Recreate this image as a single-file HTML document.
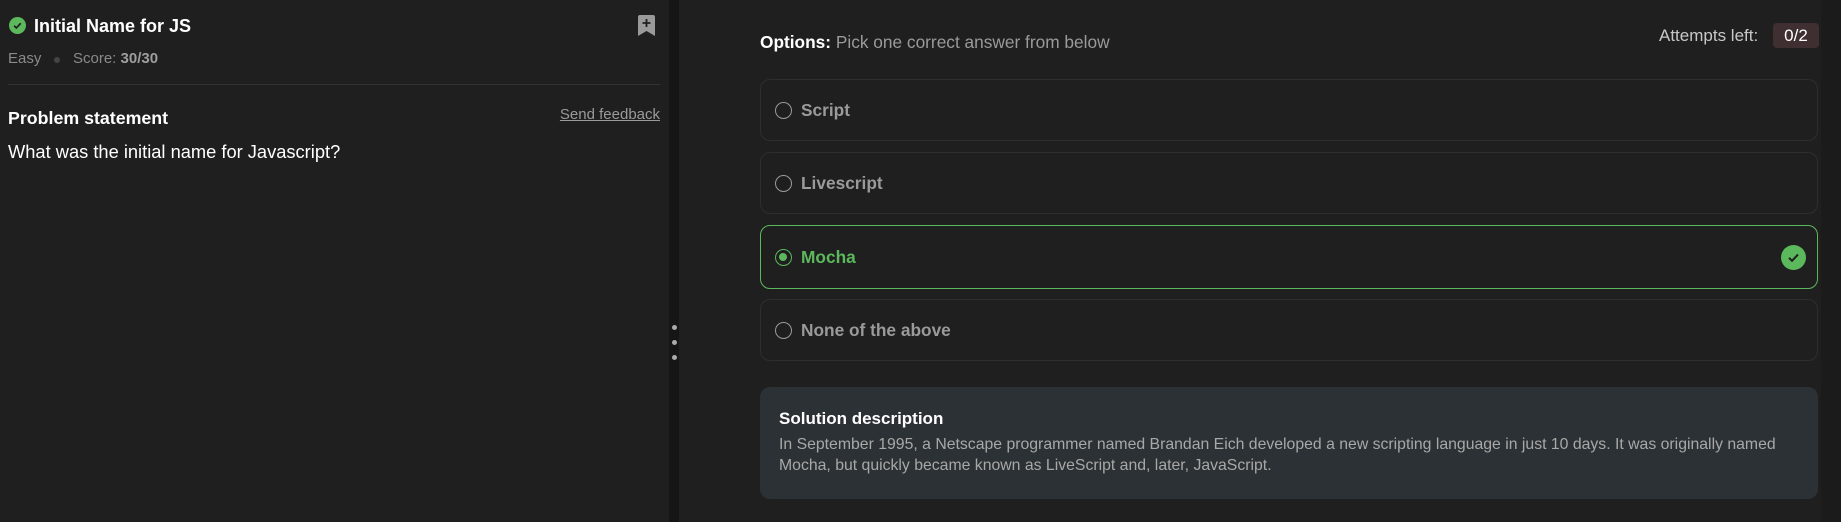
<!DOCTYPE html>
<html><head><meta charset="utf-8"><style>
*{margin:0;padding:0;box-sizing:border-box}
body{width:1841px;height:522px;background:#1f1f1f;font-family:"Liberation Sans",sans-serif;position:relative;overflow:hidden;color:#e8e8e8}
.a{position:absolute}
.opt{position:absolute;left:760px;width:1058px;height:62px;border:1px solid #2e2e2e;border-radius:10px}
.opt .r{position:absolute;left:14px;top:22px;width:17px;height:17px;border:1.5px solid #9a9a9a;border-radius:50%}
.opt .t{position:absolute;left:40px;top:0;line-height:60px;font-size:17.3px;font-weight:bold;color:#9a9a9a}
</style></head><body>
<svg class="a" style="left:9px;top:17px" width="17" height="17" viewBox="0 0 16 16"><circle cx="8" cy="8" r="8" fill="#5cb85c"/><path d="M4.8 8.2l2.1 2.1 4.2-4.4" stroke="#1f1f1f" stroke-width="1.6" fill="none"/></svg>
<div class="a" style="left:34px;top:16px;font-size:18px;font-weight:bold;color:#fff">Initial Name for JS</div>
<svg class="a" style="left:638px;top:15px" width="17" height="21" viewBox="0 0 17 21"><path d="M2 0h13a2 2 0 0 1 2 2v19l-8.5-5L0 21V2a2 2 0 0 1 2-2z" fill="#9a9a9a"/><path d="M8.5 4v8M4.5 8h8" stroke="#1f1f1f" stroke-width="1.8"/></svg>
<div class="a" style="left:8px;top:50px;font-size:15px;color:#8a8a8a">Easy</div>
<div class="a" style="left:54px;top:57px;width:6px;height:6px;border-radius:50%;background:#444"></div>
<div class="a" style="left:73px;top:50px;font-size:15px;color:#8a8a8a">Score: <b style="color:#9e9e9e">30/30</b></div>
<div class="a" style="left:8px;top:84px;width:652px;height:1px;background:#333"></div>
<div class="a" style="left:8px;top:108px;font-size:17.8px;font-weight:bold;color:#fff">Problem statement</div>
<div class="a" style="left:553px;top:106px;width:107px;text-align:right;font-size:15px;color:#9a9a9a;text-decoration:underline;white-space:nowrap;direction:rtl">Send feedback</div>
<div class="a" style="left:8px;top:141px;font-size:18.3px;color:#fff">What was the initial name for Javascript?</div>
<div class="a" style="left:669px;top:0;width:10px;height:522px;background:#151515"></div>
<div class="a" style="left:672px;top:325px;width:5px;height:5px;border-radius:50%;background:#aaa"></div>
<div class="a" style="left:672px;top:340px;width:5px;height:5px;border-radius:50%;background:#aaa"></div>
<div class="a" style="left:672px;top:355px;width:5px;height:5px;border-radius:50%;background:#aaa"></div>
<div class="a" style="left:1821px;top:0;width:20px;height:522px;background:#1b1b1b"></div>
<div class="a" style="left:760px;top:32px;font-size:17.3px;color:#9a9a9a"><b style="color:#fff">Options:</b> Pick one correct answer from below</div>
<div class="a" style="left:1659px;top:26px;font-size:17px;color:#c8c8c8">Attempts left:</div>
<div class="a" style="left:1773px;top:23px;width:46px;height:25px;border-radius:4px;background:#3f2f30;color:#fff;font-size:17px;text-align:center;line-height:25px">0/2</div>
<div class="opt" style="top:79px"><div class="r"></div><div class="t">Script</div></div>
<div class="opt" style="top:152px"><div class="r"></div><div class="t">Livescript</div></div>
<div class="opt" style="top:225px;height:64px;border-color:#5cb85c"><div class="r" style="border-color:#5cb85c;top:23px"><div style="position:absolute;left:3px;top:3px;width:8px;height:8px;border-radius:50%;background:#5cb85c"></div></div><div class="t" style="color:#5cb85c;line-height:62px">Mocha</div>
<svg style="position:absolute;left:1020px;top:19px" width="25" height="25" viewBox="0 0 25 25"><circle cx="12.5" cy="12.5" r="12.5" fill="#5cb85c"/><path d="M8 12.8l3 3 6-6.3" stroke="#1f1f1f" stroke-width="2" fill="none"/></svg></div>
<div class="opt" style="top:299px"><div class="r"></div><div class="t">None of the above</div></div>
<div class="a" style="left:760px;top:387px;width:1058px;height:112px;border-radius:10px;background:#2b3134;padding:22px 19px">
<div style="font-size:17px;font-weight:bold;color:#fff;margin-bottom:5px">Solution description</div>
<div style="font-size:15.8px;color:#a8a8a8;line-height:21px;white-space:nowrap">In September 1995, a Netscape programmer named Brandan Eich developed a new scripting language in just 10 days. It was originally named<br>Mocha, but quickly became known as LiveScript and, later, JavaScript.</div>
</div>
</body></html>
